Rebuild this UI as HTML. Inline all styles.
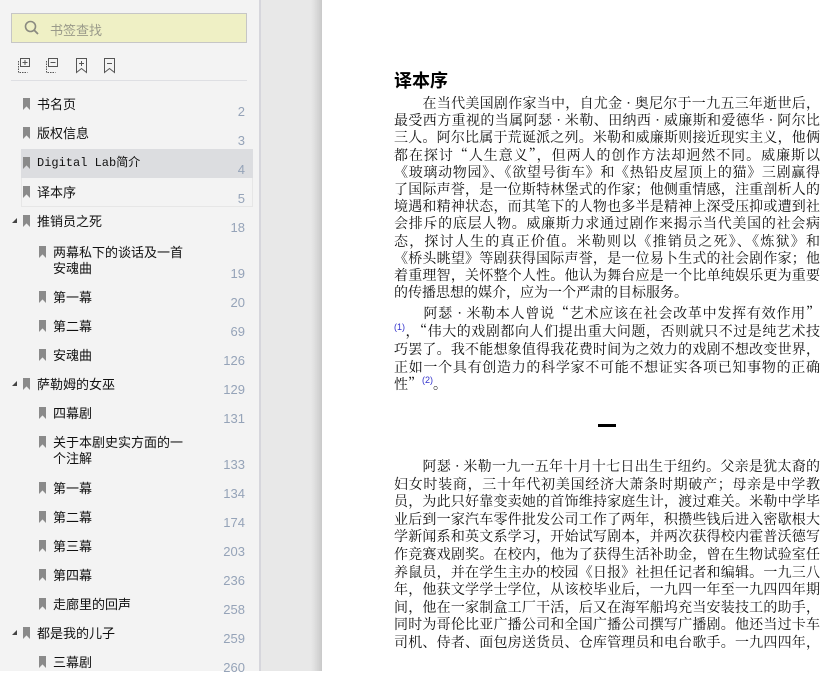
<!DOCTYPE html>
<html><head><meta charset="utf-8"><style>
*{margin:0;padding:0;box-sizing:border-box}
body{width:838px;height:671px;overflow:hidden;position:relative;background:#fff;font-family:"Liberation Sans","Noto Sans CJK SC",sans-serif}
#side{position:absolute;left:0;top:0;width:259px;height:671px;background:#f3f3f3}
#bord{position:absolute;left:259px;top:0;width:2px;height:671px;background:#d6d6dc}
#gap{position:absolute;left:261px;top:0;width:61px;height:671px;background:linear-gradient(to right,#e8e8e8 0,#e8e8e8 50px,#dedede 54px,#c9c9c9 61px)}
#search{position:absolute;left:11px;top:13px;width:236px;height:30px;background:#eff0c5;border:1px solid #c6c6c6}
#search span{position:absolute;left:38px;top:6px;font-size:13px;color:#9a9a8a;font-family:"Noto Sans CJK SC",sans-serif}
.sep{position:absolute;left:11px;top:80px;width:236px;height:1px;background:#dedfe3}
.it{position:absolute;font-size:13px;color:#111;font-family:"Noto Sans CJK SC",sans-serif;line-height:16px}
.num{position:absolute;left:185px;width:60px;font-size:13px;color:#95a3b8;font-family:"Liberation Sans",sans-serif;text-align:right}
.bm{position:absolute;width:7px;height:12px;background:#8a8a8a;clip-path:polygon(0 0,100% 0,100% 100%,50% 70%,0 100%)}
.tri{position:absolute;width:0;height:0;border-left:5px solid transparent;border-bottom:5px solid #444}
#page{position:absolute;left:322px;top:0;width:516px;height:671px;background:#fff}
.ln{position:absolute;left:394px;width:426px;font-size:14px;font-family:"Noto Serif CJK SC","Liberation Serif",serif;color:#111;text-align:justify;text-align-last:justify;white-space:nowrap;line-height:18px;height:18px}
.ln.l{text-align-last:left}
sup{color:#33c;font-size:9px;line-height:0;vertical-align:6px;font-family:"Liberation Sans",sans-serif}
</style></head><body>
<div id="side"></div><div id="bord"></div><div id="gap"></div><div id="page"></div>
<div id="search"><svg style="position:absolute;left:12px;top:6px" width="16" height="16"><circle cx="6.5" cy="6.5" r="5" fill="none" stroke="#8a8a80" stroke-width="1.6"/><line x1="10" y1="10" x2="14" y2="14" stroke="#8a8a80" stroke-width="1.8"/></svg><span>书签查找</span></div>
<svg style="position:absolute;left:17px;top:58px" width="110" height="16" fill="none" stroke="#555" stroke-width="1">
<rect x="3.5" y="0.5" width="9" height="8"/><path d="M8 2v5M5.5 4.5h5" /><path d="M1.5 3v11.5h9" stroke-dasharray="1.5 1"/>
<rect x="31.5" y="0.5" width="9" height="8"/><path d="M33.5 4.5h5"/><path d="M29.5 3v11.5h9" stroke-dasharray="1.5 1"/>
<path d="M59.5 0.5h10v14l-5-4-5 4z"/><path d="M64.5 3v5M62 5.5h5"/>
<path d="M87.5 0.5h10v14l-5-4-5 4z"/><path d="M90 5.5h5"/>
</svg>
<div class="sep"></div>
<div style="position:absolute;left:21px;top:149px;width:232px;height:29px;background:#dcdde0"></div>
<div style="position:absolute;left:21px;top:178px;width:232px;height:29px;border:1px solid #e6e6e6;border-top:none"></div>

<div class="bm" style="left:23px;top:98px"></div><div class="it" style="left:37px;top:96px">书名页</div><div class="num" style="top:104px">2</div>
<div class="bm" style="left:23px;top:127px"></div><div class="it" style="left:37px;top:125px">版权信息</div><div class="num" style="top:133px">3</div>
<div class="bm" style="left:23px;top:157px"></div><div class="it" style="left:37px;top:155px;font-family:'Liberation Mono','Noto Sans CJK SC',monospace;font-size:12px">Digital Lab简介</div><div class="num" style="top:162px">4</div>
<div class="bm" style="left:23px;top:186px"></div><div class="it" style="left:37px;top:184px">译本序</div><div class="num" style="top:191px">5</div>
<div class="tri" style="left:12px;top:218px"></div><div class="bm" style="left:23px;top:215px"></div><div class="it" style="left:37px;top:213px">推销员之死</div><div class="num" style="top:220px">18</div>
<div class="bm" style="left:39px;top:246px"></div><div class="it" style="left:53px;top:244px">两幕私下的谈话及一首<br>安魂曲</div><div class="num" style="top:266px">19</div>
<div class="bm" style="left:39px;top:291px"></div><div class="it" style="left:53px;top:289px">第一幕</div><div class="num" style="top:295px">20</div>
<div class="bm" style="left:39px;top:320px"></div><div class="it" style="left:53px;top:318px">第二幕</div><div class="num" style="top:324px">69</div>
<div class="bm" style="left:39px;top:349px"></div><div class="it" style="left:53px;top:347px">安魂曲</div><div class="num" style="top:353px">126</div>
<div class="tri" style="left:12px;top:381px"></div><div class="bm" style="left:23px;top:378px"></div><div class="it" style="left:37px;top:376px">萨勒姆的女巫</div><div class="num" style="top:382px">129</div>
<div class="bm" style="left:39px;top:407px"></div><div class="it" style="left:53px;top:405px">四幕剧</div><div class="num" style="top:411px">131</div>
<div class="bm" style="left:39px;top:436px"></div><div class="it" style="left:53px;top:434px">关于本剧史实方面的一<br>个注解</div><div class="num" style="top:457px">133</div>
<div class="bm" style="left:39px;top:482px"></div><div class="it" style="left:53px;top:480px">第一幕</div><div class="num" style="top:486px">134</div>
<div class="bm" style="left:39px;top:511px"></div><div class="it" style="left:53px;top:509px">第二幕</div><div class="num" style="top:515px">174</div>
<div class="bm" style="left:39px;top:540px"></div><div class="it" style="left:53px;top:538px">第三幕</div><div class="num" style="top:544px">203</div>
<div class="bm" style="left:39px;top:569px"></div><div class="it" style="left:53px;top:567px">第四幕</div><div class="num" style="top:573px">236</div>
<div class="bm" style="left:39px;top:598px"></div><div class="it" style="left:53px;top:596px">走廊里的回声</div><div class="num" style="top:602px">258</div>
<div class="tri" style="left:12px;top:630px"></div><div class="bm" style="left:23px;top:627px"></div><div class="it" style="left:37px;top:625px">都是我的儿子</div><div class="num" style="top:631px">259</div>
<div class="bm" style="left:39px;top:656px"></div><div class="it" style="left:53px;top:654px">三幕剧</div><div class="num" style="top:660px">260</div>

<div style="position:absolute;left:394px;top:69px;font-size:18px;font-weight:bold;font-family:'Noto Sans CJK SC',sans-serif;color:#000;line-height:22px">译本序</div>

<div class="ln" style="top:94px">　　在当代美国剧作家当中，自尤金 · 奥尼尔于一九五三年逝世后，</div>
<div class="ln" style="top:111.2px">最受西方重视的当属阿瑟 · 米勒、田纳西 · 威廉斯和爱德华 · 阿尔比</div>
<div class="ln" style="top:128.4px">三人。阿尔比属于荒诞派之列。米勒和威廉斯则接近现实主义，他俩</div>
<div class="ln" style="top:145.6px">都在探讨“人生意义”，但两人的创作方法却迥然不同。威廉斯以</div>
<div class="ln" style="top:162.8px">《玻璃动物园》、《欲望号街车》和《热铅皮屋顶上的猫》三剧赢得</div>
<div class="ln" style="top:180px">了国际声誉，是一位斯特林堡式的作家；他侧重情感，注重剖析人的</div>
<div class="ln" style="top:197.2px">境遇和精神状态，而其笔下的人物也多半是精神上深受压抑或遭到社</div>
<div class="ln" style="top:214.4px">会排斥的底层人物。威廉斯力求通过剧作来揭示当代美国的社会病</div>
<div class="ln" style="top:231.6px">态，探讨人生的真正价值。米勒则以《推销员之死》、《炼狱》和</div>
<div class="ln" style="top:248.8px">《桥头眺望》等剧获得国际声誉，是一位易卜生式的社会剧作家；他</div>
<div class="ln" style="top:266px">着重理智，关怀整个人性。他认为舞台应是一个比单纯娱乐更为重要</div>
<div class="ln l" style="top:283.2px">的传播思想的媒介，应为一个严肃的目标服务。</div>

<div class="ln" style="top:304px">　　阿瑟 · 米勒本人曾说“艺术应该在社会改革中发挥有效作用”</div>
<div class="ln" style="top:322px"><sup>(1)</sup>，“伟大的戏剧都向人们提出重大问题，否则就只不过是纯艺术技</div>
<div class="ln" style="top:340px">巧罢了。我不能想象值得我花费时间为之效力的戏剧不想改变世界，</div>
<div class="ln" style="top:358px">正如一个具有创造力的科学家不可能不想证实各项已知事物的正确</div>
<div class="ln l" style="top:375px">性”<sup>(2)</sup>。</div>

<div style="position:absolute;left:598px;top:424px;width:18px;height:3px;background:#000"></div>

<div class="ln" style="top:457px">　　阿瑟 · 米勒一九一五年十月十七日出生于纽约。父亲是犹太裔的</div>
<div class="ln" style="top:474.6px">妇女时装商，三十年代初美国经济大萧条时期破产；母亲是中学教</div>
<div class="ln" style="top:492.2px">员，为此只好靠变卖她的首饰维持家庭生计，渡过难关。米勒中学毕</div>
<div class="ln" style="top:509.8px">业后到一家汽车零件批发公司工作了两年，积攒些钱后进入密歇根大</div>
<div class="ln" style="top:527.4px">学新闻系和英文系学习，开始试写剧本，并两次获得校内霍普沃德写</div>
<div class="ln" style="top:545px">作竞赛戏剧奖。在校内，他为了获得生活补助金，曾在生物试验室任</div>
<div class="ln" style="top:562.6px">养鼠员，并在学生主办的校园《日报》社担任记者和编辑。一九三八</div>
<div class="ln" style="top:580.2px">年，他获文学学士学位，从该校毕业后，一九四一年至一九四四年期</div>
<div class="ln" style="top:597.8px">间，他在一家制盒工厂干活，后又在海军船坞充当安装技工的助手，</div>
<div class="ln" style="top:615.4px">同时为哥伦比亚广播公司和全国广播公司撰写广播剧。他还当过卡车</div>
<div class="ln" style="top:633px">司机、侍者、面包房送货员、仓库管理员和电台歌手。一九四四年，</div>
</body></html>
